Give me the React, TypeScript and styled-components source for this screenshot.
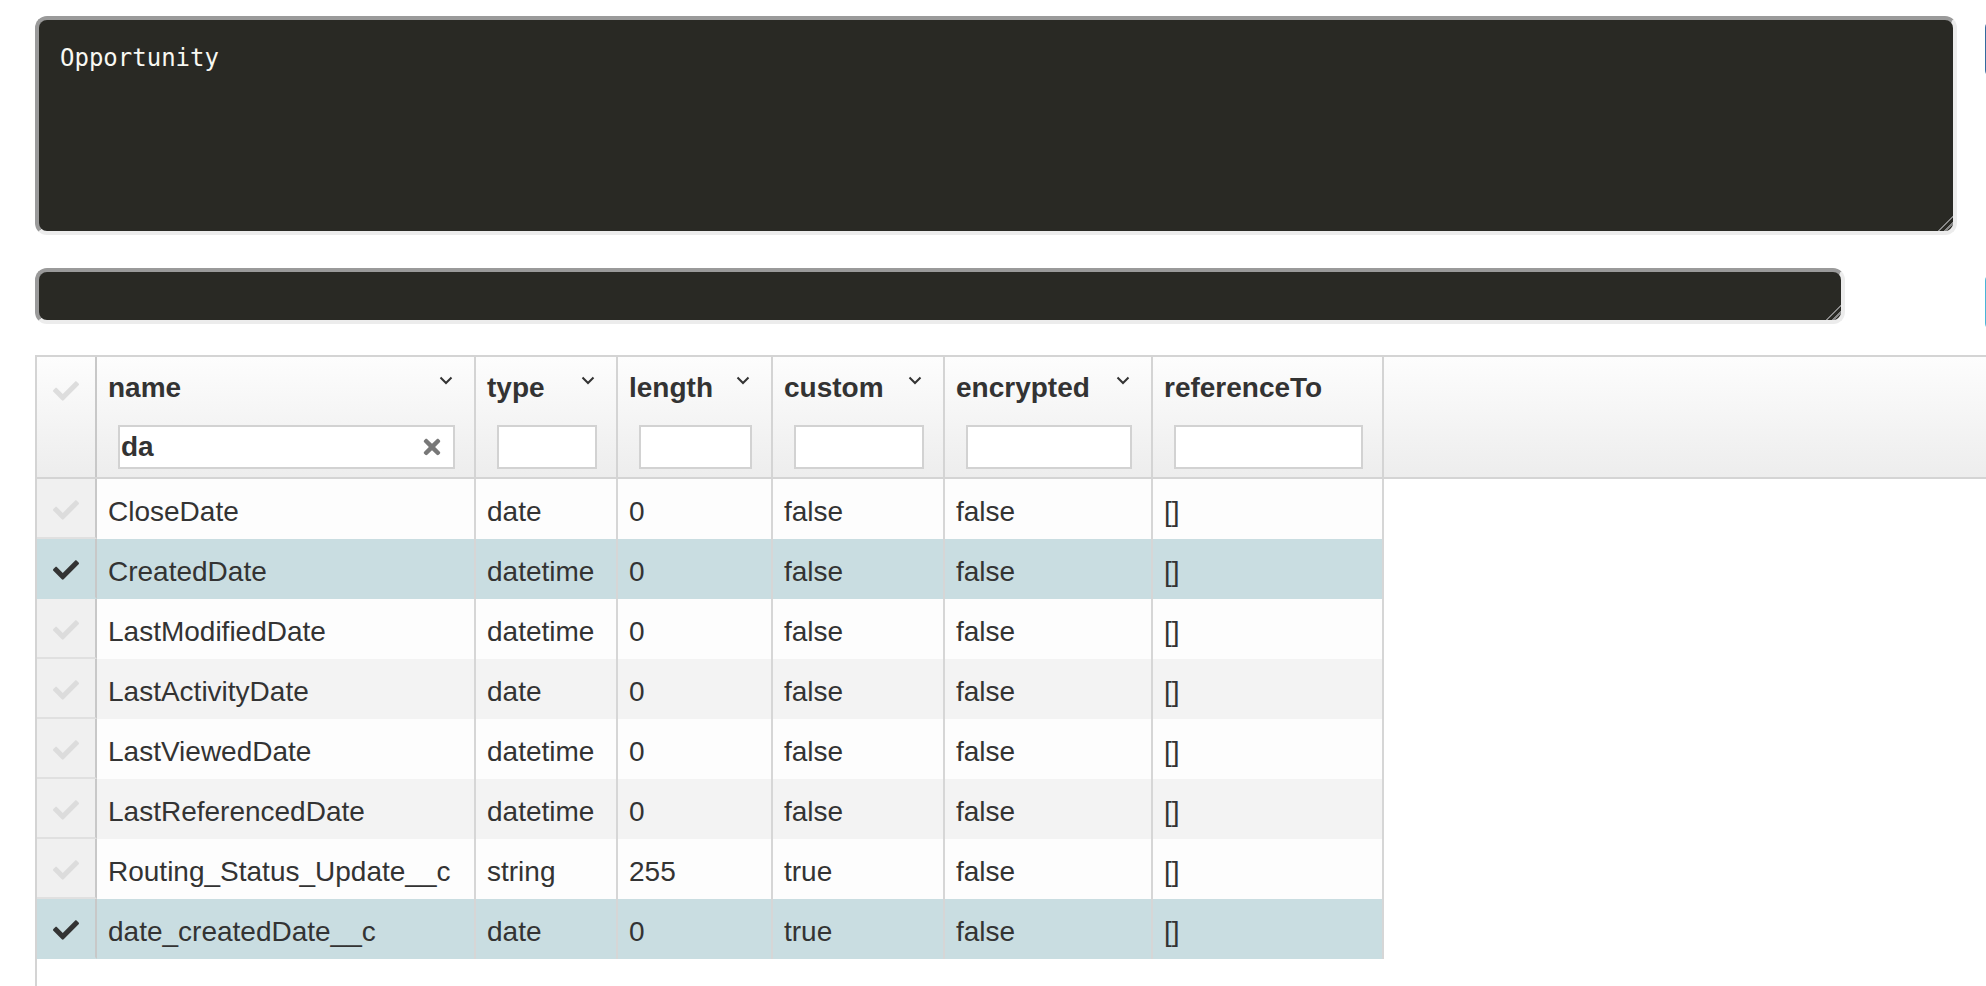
import React from "react";
import styled, { createGlobalStyle } from "styled-components";
import { FaCheck, FaTimes } from "react-icons/fa";

const GlobalStyle = createGlobalStyle`
  html, body {
    margin: 0;
    padding: 0;
    background: #ffffff;
    overflow: hidden;
  }
  body {
    font-family: "Liberation Sans", Arial, sans-serif;
    color: #333333;
  }
  *, *::before, *::after {
    box-sizing: border-box;
  }
`;

const Page = styled.div`
  width: 100vw;
  height: 100vh;
  overflow: hidden;
  padding: 16px 0 0 35px;
  display: flex;
  flex-direction: column;
`;

const EditorRow = styled.div<{ $gap: number; $top: number; $h: number }>`
  display: flex;
  align-items: flex-start;
  gap: ${(p) => p.$gap}px;
  margin-top: ${(p) => p.$top}px;
  height: ${(p) => p.$h}px;
  flex-shrink: 0;
`;

const CodeArea = styled.textarea<{ $w: number; $h: number }>`
  flex-shrink: 0;
  width: ${(p) => p.$w}px;
  height: ${(p) => p.$h}px;
  background: #292924;
  color: #f8f8f2;
  font-family: "DejaVu Sans Mono", "Liberation Mono", monospace;
  font-size: 24px;
  line-height: 28px;
  padding: 24px 21px;
  border: 4px solid;
  border-color: #9a9a9a #ececec #ececec #9a9a9a;
  border-radius: 12px;
  outline: none;
  resize: both;
  overflow: hidden;

  &::-webkit-resizer {
    background: linear-gradient(
      135deg,
      transparent 0 48%,
      #8a8a8a 48% 56%,
      transparent 56% 70%,
      #8a8a8a 70% 78%,
      transparent 78%
    );
  }
`;

const SideButton = styled.button<{ $tone: string; $offset: number }>`
  flex-shrink: 0;
  width: 120px;
  height: 58px;
  margin-top: ${(p) => p.$offset}px;
  border: 2px solid ${(p) => p.$tone};
  border-radius: 8px;
  background: ${(p) => p.$tone};
`;

const Grid = styled.div`
  margin-top: 35px;
  flex: 1;
  min-height: 0;
  border-top: 2px solid #d4d4d4;
  border-left: 2px solid #d4d4d4;
  display: flex;
  flex-direction: column;
`;

const HeaderRow = styled.div`
  display: flex;
  height: 122px;
  flex-shrink: 0;
  background: linear-gradient(#fdfdfd, #ededed);
  border-bottom: 2px solid #d4d4d4;
`;

const HeaderSelect = styled.div`
  width: 60px;
  flex-shrink: 0;
  border-right: 2px solid #c8c8c8;
  display: flex;
  justify-content: center;
  padding-top: 21px;
  color: #dddddd;
`;

const HeaderCell = styled.div<{ $w: number }>`
  width: ${(p) => p.$w}px;
  flex-shrink: 0;
  border-right: 2px solid #d4d4d4;
  display: flex;
  flex-direction: column;
`;

const HeaderFiller = styled.div`
  flex: 1;
`;

const TitleRow = styled.div`
  height: 62px;
  padding: 0 21px 0 11px;
  display: flex;
  align-items: center;
  justify-content: space-between;
  font-weight: bold;
  font-size: 28px;
  color: #333333;
  white-space: nowrap;
`;

const SortChevron = styled.svg`
  flex-shrink: 0;
  margin-bottom: 16px;
`;

const FilterBox = styled.div`
  position: relative;
  height: 44px;
  margin: 6px 19px 0 21px;
`;

const FilterInput = styled.input`
  width: 100%;
  height: 100%;
  border: 2px solid #d2d2d2;
  background: #ffffff;
  padding: 0 34px 0 1px;
  font-family: "Liberation Sans", Arial, sans-serif;
  font-weight: bold;
  font-size: 28px;
  color: #333333;
  outline: none;
`;

const ClearIcon = styled.span`
  position: absolute;
  right: 11px;
  top: 50%;
  transform: translateY(-50%);
  display: flex;
  color: #787878;
`;

const BodyRow = styled.div<{ $bg: string }>`
  display: flex;
  width: max-content;
  height: 60px;
  flex-shrink: 0;
  background: ${(p) => p.$bg};
`;

const SelectCell = styled.div<{ $selected: boolean }>`
  width: 60px;
  flex-shrink: 0;
  display: flex;
  align-items: center;
  justify-content: center;
  padding-top: 3px;
  background: ${(p) => (p.$selected ? "#c9dde1" : "#f0f0f0")};
  border-right: 2px solid #c8c8c8;
  border-bottom: 2px solid ${(p) => (p.$selected ? "#c9dde1" : "#e0e0e0")};
  color: ${(p) => (p.$selected ? "#333333" : "#dcdcdc")};
`;

const Cell = styled.div<{ $w: number }>`
  width: ${(p) => p.$w}px;
  flex-shrink: 0;
  display: flex;
  align-items: center;
  padding: 5px 0 0 11px;
  border-right: 2px solid #d6d6d6;
  font-size: 28px;
  color: #333333;
  white-space: nowrap;
  overflow: hidden;
`;

type Field = {
  name: string;
  type: string;
  length: string;
  custom: string;
  encrypted: string;
  referenceTo: string;
  selected: boolean;
};

const columns: { key: keyof Omit<Field, "selected">; width: number; sortable: boolean }[] = [
  { key: "name", width: 379, sortable: true },
  { key: "type", width: 142, sortable: true },
  { key: "length", width: 155, sortable: true },
  { key: "custom", width: 172, sortable: true },
  { key: "encrypted", width: 208, sortable: true },
  { key: "referenceTo", width: 231, sortable: false },
];

const fields: Field[] = [
  { name: "CloseDate", type: "date", length: "0", custom: "false", encrypted: "false", referenceTo: "[]", selected: false },
  { name: "CreatedDate", type: "datetime", length: "0", custom: "false", encrypted: "false", referenceTo: "[]", selected: true },
  { name: "LastModifiedDate", type: "datetime", length: "0", custom: "false", encrypted: "false", referenceTo: "[]", selected: false },
  { name: "LastActivityDate", type: "date", length: "0", custom: "false", encrypted: "false", referenceTo: "[]", selected: false },
  { name: "LastViewedDate", type: "datetime", length: "0", custom: "false", encrypted: "false", referenceTo: "[]", selected: false },
  { name: "LastReferencedDate", type: "datetime", length: "0", custom: "false", encrypted: "false", referenceTo: "[]", selected: false },
  { name: "Routing_Status_Update__c", type: "string", length: "255", custom: "true", encrypted: "false", referenceTo: "[]", selected: false },
  { name: "date_createdDate__c", type: "date", length: "0", custom: "true", encrypted: "false", referenceTo: "[]", selected: true },
];

const Chevron = () => (
  <SortChevron width="14" height="9" viewBox="0 0 14 9">
    <path d="M1.5 1.5 L7 7 L12.5 1.5" fill="none" stroke="#333" strokeWidth="2" />
  </SortChevron>
);

const rowBg = (f: Field, i: number) => (f.selected ? "#c9dde1" : i % 2 === 0 ? "#fdfdfd" : "#f3f3f3");

export default function App() {
  return (
    <>
      <GlobalStyle />
      <Page>
        <EditorRow $gap={28} $top={0} $h={219}>
          <CodeArea $w={1922} $h={219} defaultValue="Opportunity" spellCheck={false} />
          <SideButton $tone="#336b9e" $offset={4} aria-label="run query" />
        </EditorRow>
        <EditorRow $gap={140} $top={33} $h={52}>
          <CodeArea $w={1810} $h={52} defaultValue="" spellCheck={false} />
          <SideButton $tone="#46b6d8" $offset={5} aria-label="run filter" />
        </EditorRow>
        <Grid>
          <HeaderRow>
            <HeaderSelect>
              <FaCheck size={26} />
            </HeaderSelect>
            {columns.map((c) => (
              <HeaderCell key={c.key} $w={c.width}>
                <TitleRow>
                  <span>{c.key}</span>
                  {c.sortable && <Chevron />}
                </TitleRow>
                <FilterBox>
                  <FilterInput defaultValue={c.key === "name" ? "da" : ""} spellCheck={false} />
                  {c.key === "name" && (
                    <ClearIcon>
                      <FaTimes size={24} />
                    </ClearIcon>
                  )}
                </FilterBox>
              </HeaderCell>
            ))}
            <HeaderFiller />
          </HeaderRow>
          {fields.map((f, i) => (
            <BodyRow key={f.name} $bg={rowBg(f, i)}>
              <SelectCell $selected={f.selected}>
                <FaCheck size={26} />
              </SelectCell>
              {columns.map((c) => (
                <Cell key={c.key} $w={c.width}>
                  {f[c.key]}
                </Cell>
              ))}
            </BodyRow>
          ))}
        </Grid>
      </Page>
    </>
  );
}
